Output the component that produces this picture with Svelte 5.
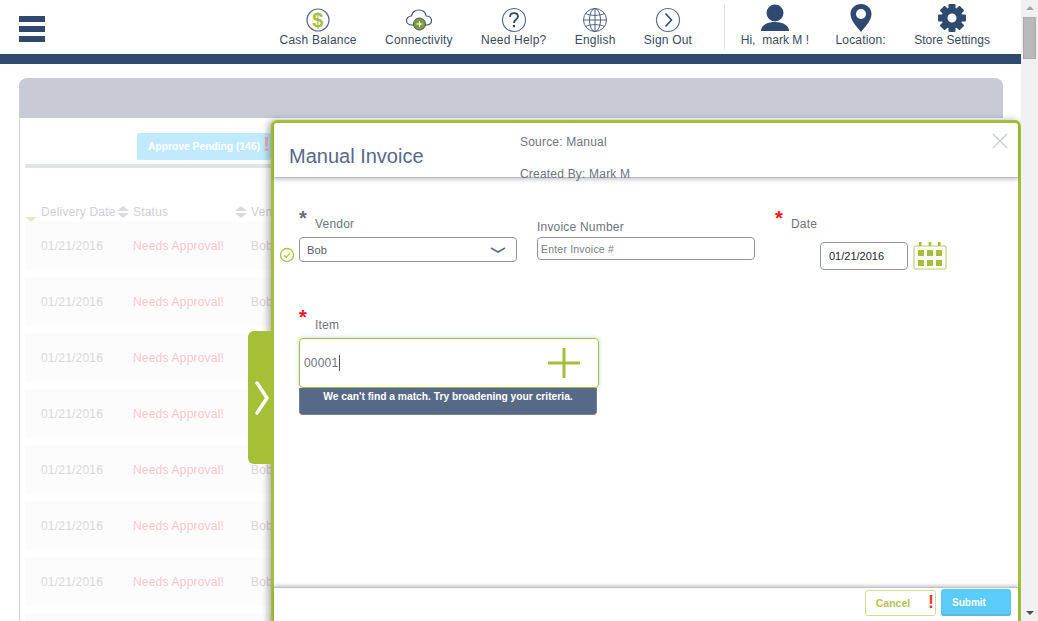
<script>
  const navLeft = [
    { label: "Cash Balance", icon: "cash" },
    { label: "Connectivity", icon: "cloud" },
    { label: "Need Help?", icon: "help" },
    { label: "English", icon: "globe" },
    { label: "Sign Out", icon: "signout" }
  ];
  const navRight = [
    { label: "Hi,  mark M !", icon: "user", tight: true },
    { label: "Location:", icon: "pin" },
    { label: "Store Settings", icon: "gear", tight: true }
  ];
  const rows = Array.from({ length: 7 }, () => ({
    date: "01/21/2016",
    status: "Needs Approval!",
    vendor: "Bob"
  }));
</script>

{#snippet navIcon(name)}
  <svg class="nav-icon" viewBox="0 0 36 36" width="36" height="36" aria-hidden="true">
    {#if name === "cash"}
      <circle cx="18" cy="18" r="11" fill="#fff" stroke="#5a6e8c" stroke-width="1.200" />
      <text x="18" y="25" text-anchor="middle" class="dollar">$</text>
    {:else if name === "cloud"}
      <path d="M11 23c-3.500 0-5.500-2.200-5.500-4.500S7.500 14 10.500 14c.8-3.500 3.800-6 7.500-6s6.500 2.500 7.200 6c3 0 5.300 2 5.300 4.500S28.500 23 25 23z" fill="#fff" stroke="#3d5474" stroke-width="1.200" />
      <circle cx="18.500" cy="22" r="6" fill="#7f9d35" stroke="#3d5474" stroke-width="1" />
      <path d="M18.500 19v6M15.500 22h6" stroke="#fff" stroke-width="1.100" />
    {:else if name === "help"}
      <circle cx="18" cy="18" r="11.500" fill="#fff" stroke="#5a6e8c" stroke-width="1.200" />
      <path d="M14 15c0-2.500 1.800-3.800 4-3.800s4 1.300 4 3.400c0 3-4 3-4 6.400" fill="none" stroke="#35496a" stroke-width="1.800" />
      <rect x="17" y="23" width="2" height="2.200" fill="#35496a" />
    {:else if name === "globe"}
      <g fill="none" stroke="#4d6384" stroke-width="1">
        <circle cx="18" cy="18" r="11.500" />
        <ellipse cx="18" cy="18" rx="5.500" ry="11.500" />
        <path d="M18 6.500v23M6.500 18h23M8.500 11.500c5 2.500 14 2.500 19 0M8.500 24.500c5-2.500 14-2.500 19 0" />
      </g>
    {:else if name === "signout"}
      <circle cx="18" cy="18" r="11.500" fill="#fff" stroke="#5a6e8c" stroke-width="1.200" />
      <path d="M15.500 11.500L21.500 18l-6 6.500" fill="none" stroke="#35496a" stroke-width="1.600" />
    {:else if name === "user"}
      <circle cx="18" cy="11" r="8.500" fill="#2e4a70" />
      <path d="M4 29c0-5 5-9 14-9s14 4 14 9z" fill="#2e4a70" />
    {:else if name === "pin"}
      <path fill-rule="evenodd" d="M18 2c5.800 0 10.500 4.400 10.500 10 0 6-5.500 12-10.500 18-5-6-10.500-12-10.500-18C7.500 6.400 12.200 2 18 2zm0 5a5 5 0 1 0 0 10 5 5 0 0 0 0-10z" fill="#2e4a70" />
    {:else if name === "gear"}
      <g fill="#2e4a70">
        <path fill-rule="evenodd" d="M18 5.500a10.500 10.500 0 1 0 0 21 10.500 10.500 0 0 0 0-21zm0 6a4.500 4.500 0 1 1 0 9 4.500 4.500 0 0 1 0-9z" />
        {#each [0, 45, 90, 135, 180, 225, 270, 315] as a}
          <rect x="14.500" y="2" width="7" height="7" rx="1" transform="rotate({a} 18 16)" />
        {/each}
      </g>
    {/if}
  </svg>
{/snippet}

{#snippet sortArrows()}
  <span class="sort"><i class="up"></i><i class="down"></i></span>
{/snippet}

<div class="page">
  <main>
    <header>
      <button class="burger" aria-label="Menu"><span></span><span></span><span></span></button>
      <nav>
        {#each navLeft as item}
          <div class="nav-item">
            {@render navIcon(item.icon)}
            <span>{item.label}</span>
          </div>
        {/each}
        <div class="nav-sep"></div>
        {#each navRight as item}
          <div class="nav-item" class:tight={item.tight} class:user={item.icon === "user"}>
            {@render navIcon(item.icon)}
            <span>{item.label}</span>
          </div>
        {/each}
      </nav>
    </header>
    <div class="bar"></div>

    <section class="panel">
      <div class="panel-head"></div>
      <div class="panel-body">
        <div class="actions">
          <button class="approve">Approve Pending (146)</button>
          <span class="approve-mark">!</span>
        </div>
        <div class="rule"></div>
        <div class="thead">
          <span class="col col-date"><i class="active-sort"></i>Delivery Date{@render sortArrows()}</span>
          <span class="col col-status">Status{@render sortArrows()}</span>
          <span class="col col-vendor">Vendor</span>
        </div>
        {#each rows as row}
          <div class="row">
            <span class="col col-date">{row.date}</span>
            <span class="col col-status needs">{row.status}</span>
            <span class="col col-vendor">{row.vendor}</span>
          </div>
        {/each}
        <div class="row"></div>
      </div>
    </section>

    <section class="modal">
      <div class="modal-head">
        <h2>Manual Invoice</h2>
        <div class="meta">
          <p>Source: Manual</p>
          <p>Created By: Mark M</p>
        </div>
        <button class="close" aria-label="Close">
          <svg viewBox="0 0 16 16" width="16" height="16" aria-hidden="true">
            <path d="M1 1l14 14M15 1L1 15" stroke="#c5c9d2" stroke-width="1.200" fill="none" />
          </svg>
        </button>
      </div>

      <div class="modal-body">
        <div class="fields">
          <div class="field vendor">
            <div class="label"><b class="star grey">*</b><span>Vendor</span></div>
            <div class="vendor-line">
              <svg class="ok" viewBox="0 0 16 16" width="16" height="16" aria-hidden="true">
                <circle cx="8" cy="8" r="6.500" fill="none" stroke="#a9c24a" stroke-width="1.300" />
                <path d="M5 8.200l2.200 2.200L11 6" fill="none" stroke="#a9c24a" stroke-width="1.300" />
              </svg>
              <div class="select">
                <span>Bob</span>
                <svg viewBox="0 0 16 6" width="16" height="6" aria-hidden="true">
                  <path d="M1 1l7 4 7-4" fill="none" stroke="#5d6f8a" stroke-width="1.600" />
                </svg>
              </div>
            </div>
          </div>

          <div class="field invoice">
            <div class="plain-label">Invoice Number</div>
            <input type="text" placeholder="Enter Invoice #" />
          </div>

          <div class="field date">
            <div class="label"><b class="star">*</b><span>Date</span></div>
            <div class="date-line">
              <input type="text" value="01/21/2016" />
              <svg viewBox="0 0 34 28" width="34" height="28" aria-hidden="true">
                <rect x="1" y="4" width="32" height="23" rx="2" fill="#fff" stroke="#cfdc9c" stroke-width="1.500" />
                <g fill="#a5bf37">
                  <rect x="6" y="0" width="2.500" height="4" />
                  <rect x="15.700" y="0" width="2.500" height="4" />
                  <rect x="25" y="0" width="2.500" height="4" />
                  {#each [8, 18] as y}
                    {#each [5, 14, 23] as x}
                      <rect {x} {y} width="6" height="6" />
                    {/each}
                  {/each}
                </g>
              </svg>
            </div>
          </div>
        </div>

        <div class="item">
          <div class="label"><b class="star">*</b><span>Item</span></div>
          <div class="item-input">
            <span class="typed">00001</span>
            <svg viewBox="0 0 32 30" width="32" height="30" aria-hidden="true">
              <path d="M16 0v30M0 15h32" stroke="#a5bf37" stroke-width="3" fill="none" />
            </svg>
          </div>
          <div class="no-match">We can't find a match. Try broadening your criteria.</div>
        </div>
      </div>

      <div class="modal-foot">
        <button class="cancel">Cancel<span class="bang">!</span></button>
        <button class="submit">Submit</button>
      </div>
    </section>

    <button class="handle" aria-label="Collapse">
      <svg viewBox="0 0 16 36" width="16" height="36" aria-hidden="true">
        <path d="M3 3l10 15L3 33" fill="none" stroke="#fff" stroke-width="3.500" stroke-linecap="round" stroke-linejoin="round" />
      </svg>
    </button>
  </main>

  <aside class="scrollbar">
    <i class="arrow-up"></i>
    <div class="thumb"></div>
    <i class="arrow-down"></i>
  </aside>
</div>

<style>
  :global(body) {
    font-family: "Liberation Sans", Arial, sans-serif;
    overflow: hidden;
  }
  .page {
    display: flex;
    height: 621px;
    overflow: hidden;
  }
  main {
    position: relative;
    flex: 1;
    min-width: 0;
    background: #fff;
    letter-spacing: 0.2px;
  }
  button {
    font-family: inherit;
    padding: 0;
    border: none;
    background: none;
  }
  header {
    display: flex;
    justify-content: space-between;
    height: 54px;
  }
  .burger {
    display: flex;
    flex-direction: column;
    gap: 4px;
    margin: 16px 0 0 19px;
    height: 26px;
  }
  .burger span {
    display: block;
    width: 26px;
    height: 6px;
    background: #2e4a70;
  }
  nav {
    display: flex;
    gap: 28.300px;
    padding-right: 31px;
  }
  .nav-item {
    display: flex;
    flex-direction: column;
    align-items: center;
    font-size: 12px;
    color: #3b4a63;
    white-space: pre;
  }
  .nav-item.tight {
    letter-spacing: 0.03px;
  }
  .nav-item.user {
    margin-right: -2px;
  }
  .nav-icon {
    margin-top: 2px;
  }
  .dollar {
    font-size: 20px;
    font-weight: bold;
    fill: #a5bf37;
  }
  .nav-item span {
    margin-top: -5px;
    line-height: 14px;
  }
  .nav-sep {
    width: 1px;
    height: 45px;
    margin: 4px -13px 0 4px;
    background: #dcdfe3;
  }
  .bar {
    height: 10px;
    background: #2e4a70;
  }
  .panel {
    margin: 14px 18px 0 19px;
  }
  .panel-head {
    height: 40px;
    background: #c6cbd6;
    border-radius: 8px 8px 0 0;
  }
  .panel-body {
    border-left: 1px solid #d4d7de;
    padding-left: 5px;
    height: 520px;
  }
  .actions {
    position: relative;
    display: flex;
    justify-content: flex-end;
    width: 246px;
    padding-top: 15px;
  }
  .approve {
    width: 134px;
    height: 27px;
    border-radius: 2px;
    background: #c0ebff;
    color: #fff;
    font-size: 10.300px;
    font-weight: bold;
  }
  .approve-mark {
    position: absolute;
    right: 1px;
    top: 15px;
    color: #f5ada4;
    font-size: 20px;
    line-height: 22px;
    font-weight: bold;
  }
  .rule {
    height: 4px;
    margin-top: 4px;
    background: #e1e3e8;
  }
  .thead {
    display: flex;
    align-items: center;
    height: 21px;
    margin-top: 33px;
    color: #cfcfd4;
    font-size: 12px;
  }
  .col {
    display: flex;
    align-items: center;
    flex: none;
  }
  .col-date {
    width: 108px;
    padding-left: 16px;
    box-sizing: border-box;
    white-space: nowrap;
  }
  .thead .col-date {
    position: relative;
  }
  .active-sort {
    position: absolute;
    left: 0;
    top: 12px;
    border: 6px solid transparent;
    border-top: 5px solid #e5ebc5;
    border-bottom: 0;
  }
  .col-status {
    width: 118px;
    white-space: nowrap;
  }
  .sort {
    display: inline-flex;
    flex-direction: column;
    gap: 2px;
    margin-left: 1px;
  }
  .thead .col-status {
    padding-right: 4px;
    box-sizing: border-box;
  }
  .thead .col-status .sort {
    margin-left: auto;
  }
  .sort i {
    display: block;
    border: 6px solid transparent;
  }
  .sort .up {
    border-top: 0;
    border-bottom: 5px solid #dadade;
  }
  .sort .down {
    border-bottom: 0;
    border-top: 5px solid #dadade;
  }
  .row {
    display: flex;
    align-items: center;
    height: 48px;
    margin-bottom: 8px;
    background: #fcfcfc;
    color: #d8d8dc;
    font-size: 12px;
  }
  .row .col-vendor {
    color: #dcd6d8;
  }
  .needs {
    color: #ffc4cb;
  }
  .handle {
    position: absolute;
    left: 248px;
    top: 331px;
    width: 26px;
    height: 133px;
    display: flex;
    align-items: center;
    justify-content: flex-start;
    padding-left: 6px;
    box-sizing: border-box;
    background: #a5bf37;
    border-radius: 6px 0 0 6px;
  }
  .modal {
    position: absolute;
    left: 271px;
    top: 120px;
    right: 0;
    bottom: -6px;
    display: flex;
    flex-direction: column;
    box-sizing: border-box;
    background: #fff;
    border: 3px solid #a5bf37;
    border-radius: 6px 6px 0 0;
    box-shadow: -3px 0 7px rgba(0, 0, 0, 0.3);
  }
  .modal-head {
    position: relative;
    flex: none;
    height: 54px;
    border-bottom: 1px solid #b9bcc4;
    box-shadow: 0 2px 4px rgba(0, 0, 0, 0.2);
    box-sizing: content-box;
  }
  h2 {
    position: absolute;
    left: 15px;
    top: 21px;
    margin: 0;
    font-size: 20px;
    font-weight: normal;
    line-height: 24px;
    letter-spacing: 0;
    color: #55698a;
  }
  .meta {
    position: absolute;
    left: 246px;
    top: 12px;
    font-size: 12px;
    color: #6f7480;
  }
  .meta p {
    margin: 0 0 18px;
    line-height: 14px;
  }
  .close {
    position: absolute;
    right: 10px;
    top: 10px;
    line-height: 0;
  }
  .modal-body {
    flex: 1;
    padding: 0 0 0 26px;
  }
  .fields {
    display: flex;
    height: 103px;
  }
  .field {
    flex: none;
    box-sizing: border-box;
  }
  .vendor {
    width: 238px;
    padding-top: 31px;
    margin-left: -1px;
  }
  .label {
    display: flex;
    align-items: flex-start;
    height: 28px;
    padding-left: 20px;
    font-size: 12px;
    color: #6f7480;
  }
  .label span {
    margin: 8px 0 0 0;
  }
  .star {
    width: 16px;
    margin-left: -20px;
    font-size: 20px;
    font-weight: bold;
    line-height: 18px;
    color: #ff1020;
  }
  .star.grey {
    color: #666c78;
  }
  .vendor-line {
    position: relative;
  }
  .ok {
    position: absolute;
    left: -20px;
    top: 10px;
  }
  .select {
    display: flex;
    align-items: center;
    justify-content: space-between;
    width: 218px;
    height: 25px;
    padding: 0 10px 0 7px;
    box-sizing: border-box;
    border: 1px solid #90949c;
    border-radius: 4px;
    font-size: 11px;
    color: #555b68;
  }
  .invoice {
    width: 238px;
    padding-top: 42px;
  }
  .plain-label {
    height: 17px;
    font-size: 12px;
    color: #6f7480;
  }
  input {
    box-sizing: border-box;
    font-family: inherit;
    border: 1px solid #90949c;
    border-radius: 4px;
    outline: none;
  }
  .invoice input {
    display: block;
    width: 218px;
    height: 23px;
    padding: 0 3px;
    font-size: 10.500px;
    letter-spacing: 0.2px;
  }
  .invoice input::placeholder {
    color: #777c86;
    opacity: 1;
  }
  .date {
    padding: 31px 0 0;
  }
  .date .label {
    height: 33px;
  }
  .date-line {
    display: flex;
    align-items: center;
    gap: 5px;
    margin-left: 45px;
  }
  .date-line input {
    width: 88px;
    height: 28px;
    padding: 0 8px;
    font-size: 11px;
    color: #1d2430;
  }
  .item {
    width: 300px;
    margin-top: 27px;
    margin-left: -1px;
  }
  .item .label {
    height: 30px;
  }
  .item .label span {
    margin-top: 10px;
  }
  .item-input {
    display: flex;
    align-items: center;
    justify-content: space-between;
    height: 50px;
    padding: 0 18px 0 4px;
    box-sizing: border-box;
    border: 1px solid #a5bf37;
    border-radius: 4px;
    box-shadow: 0 0 4px rgba(120, 180, 230, 0.5);
  }
  .typed {
    padding-right: 1px;
    border-right: 1px solid #555;
    font-size: 12px;
    line-height: 16px;
    color: #6f7480;
  }
  .no-match {
    width: 298px;
    height: 27px;
    box-sizing: border-box;
    padding-top: 2px;
    text-align: center;
    font-size: 10.250px;
    font-weight: bold;
    line-height: 13px;
    letter-spacing: 0;
    color: #fff;
    background: #566a88;
    border: 1px solid #777f8d;
    border-top: 0;
    border-radius: 0 0 4px 4px;
  }
  .modal-foot {
    flex: none;
    display: flex;
    justify-content: flex-end;
    align-items: flex-start;
    gap: 5px;
    height: 37px;
    padding: 1px 7px 0 0;
    box-sizing: border-box;
    border-top: 1px solid #bfc1c6;
    box-shadow: 0 -2px 3px rgba(0, 0, 0, 0.18);
  }
  .cancel {
    position: relative;
    width: 71px;
    height: 26px;
    margin-top: 1px;
    padding-right: 15px;
    box-sizing: border-box;
    border: 1px solid #d3dc94;
    border-radius: 3px;
    font-size: 10.500px;
    font-weight: bold;
    color: #b4c350;
    background: #fff;
  }
  .bang {
    position: absolute;
    right: 1px;
    top: 0;
    color: #f03a30;
    font-size: 18px;
    line-height: 22px;
    font-weight: bold;
  }
  .submit {
    width: 70px;
    height: 27px;
    border-radius: 3px;
    background: #5accfc;
    box-shadow: inset 0 -2px 0 #62b8dc;
    color: #fff;
    font-size: 10px;
    font-weight: bold;
    text-align: left;
    padding-left: 11px;
  }
  .scrollbar {
    flex: none;
    position: relative;
    width: 17px;
    background: #f1f1f1;
  }
  .thumb {
    position: absolute;
    left: 2px;
    top: 17px;
    width: 13px;
    height: 42px;
    background: #b9b9b9;
    border: 1px solid #aaa;
    box-sizing: border-box;
  }
  .arrow-up,
  .arrow-down {
    position: absolute;
    left: 5px;
    border: 4px solid transparent;
  }
  .arrow-up {
    top: 6px;
    border-top: 0;
    border-bottom-color: #a5a5a5;
  }
  .arrow-down {
    bottom: 6px;
    border-bottom: 0;
    border-top-color: #505050;
  }
</style>
